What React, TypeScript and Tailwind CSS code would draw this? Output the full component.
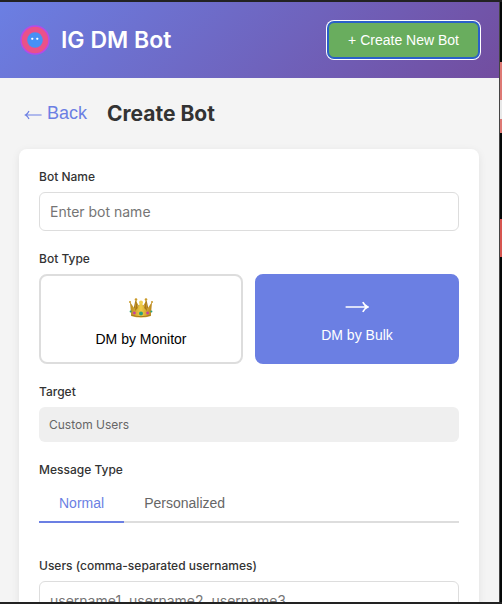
import { useState } from 'react';
import type { ReactNode } from 'react';

const TABS = ['Normal', 'Personalized'] as const;

const LABEL = 'block text-xs leading-[15px] font-medium text-[#333333] mb-2';
const FIELD =
  'block w-full rounded-md border border-[#dddddd] bg-white px-2.5 py-2.5 text-sm leading-[17px] text-[#333333] placeholder:text-[#757575] outline-none';

function Logo() {
  return (
    <svg viewBox="0 0 32 32" className="w-8 h-8" aria-hidden="true">
      <circle cx="16" cy="16" r="14" fill="#ea5189" stroke="#b74be6" strokeWidth="1.5" />
      <circle cx="16" cy="16" r="7.8" fill="#4690f6" />
      <rect x="12.4" y="13.8" width="1.8" height="2" rx="0.5" fill="#ffffff" />
      <rect x="17.4" y="13.8" width="1.8" height="2" rx="0.5" fill="#ffffff" />
    </svg>
  );
}

function Crown() {
  return (
    <svg viewBox="0 0 32 32" className="w-8 h-8" aria-hidden="true">
      <defs>
        <linearGradient id="gold" x1="0" x2="1" y1="0" y2="0">
          <stop offset="0" stopColor="#b98a20" />
          <stop offset="0.5" stopColor="#f0cb45" />
          <stop offset="1" stopColor="#b8841c" />
        </linearGradient>
      </defs>
      <path d="M8 21 L10.3 9.5 L16 18 L21.7 9.5 L24 21 Z" fill="#9c6d18" />
      <path d="M5 11 L9.5 17.5 L11.2 9 L13.2 15.5 L16 11 L18.8 15.5 L20.8 9 L22.5 17.5 L27 11 L25.8 25 Q16 28 6.2 25 Z" fill="url(#gold)" />
      <path d="M11.2 10 L12.8 17 L10 20 Z M20.8 10 L19.2 17 L22 20 Z" fill="#a87718" />
      <path d="M6.2 24 Q16 27.4 25.8 24" fill="none" stroke="#a97b1c" strokeWidth="1" />
      <circle cx="5" cy="11" r="1" fill="#c99a2a" />
      <circle cx="11" cy="8.6" r="1.3" fill="#c99a2a" />
      <circle cx="16" cy="11.4" r="2" fill="#f0d050" />
      <circle cx="21" cy="8.6" r="1.3" fill="#c99a2a" />
      <circle cx="27" cy="11" r="1" fill="#c99a2a" />
      <circle cx="16" cy="22.6" r="2" fill="#2aa27e" />
      <circle cx="9.4" cy="22" r="1.4" fill="#c43fa4" />
      <circle cx="22.6" cy="22" r="1.4" fill="#c43fa4" />
      <circle cx="5.6" cy="20.4" r="1" fill="#2aa27e" />
      <circle cx="26.4" cy="20.4" r="1" fill="#2aa27e" />
    </svg>
  );
}

function ArrowLeft() {
  return (
    <svg viewBox="0 0 18 18" className="w-[18px] h-[18px]" fill="none" stroke="currentColor" strokeWidth="1.2" aria-hidden="true">
      <path d="M17.6 10 H1.4 M5 6 Q3.8 8.8 1.4 10 Q3.8 11.2 5 14" />
    </svg>
  );
}

function ArrowRight() {
  return (
    <svg viewBox="0 0 24 24" className="w-6 h-6" fill="none" stroke="currentColor" strokeWidth="1.7" aria-hidden="true">
      <path d="M0.6 12 H23 M17.8 7.2 Q19.4 10.6 22.8 12 Q19.4 13.4 17.8 16.8" />
    </svg>
  );
}

function TypeButton({ active, icon, label, onClick }: {
  active: boolean;
  icon: ReactNode;
  label: string;
  onClick: () => void;
}) {
  return (
    <button
      type="button"
      aria-pressed={active}
      onClick={onClick}
      className={`flex flex-col items-center justify-center gap-2 min-h-[90px] rounded-lg border-2 p-[15px] font-['Liberation_Sans',sans-serif] text-sm leading-4 ${
        active ? 'border-[#6b7fe3] bg-[#6b7fe3] text-white' : 'border-[#dddddd] bg-white text-black'
      }`}
    >
      {icon}
      <span>{label}</span>
    </button>
  );
}

// Sliver of the desktop that shows beside the window
function DesktopEdge() {
  return (
    <div className="w-[3px] shrink-0 flex flex-col border-l border-[#444444] bg-[#050808]" aria-hidden="true">
      <div className="h-[60px]" />
      <div className="h-[38px] bg-[#dd7974]" />
      <div className="h-[19px] bg-[#e8e8e8]" />
      <div className="h-[14px] bg-[#dd7974]" />
      <div className="h-[86px]" />
      <div className="h-[38px] bg-[#d65550]" />
    </div>
  );
}

export default function App() {
  const [botType, setBotType] = useState<'monitor' | 'bulk'>('bulk');
  const [tab, setTab] = useState<(typeof TABS)[number]>('Normal');

  return (
    <div className="h-screen flex overflow-hidden border-y-2 border-[#222222] font-['Inter',sans-serif]">
      <div className="flex-1 min-w-0 overflow-hidden bg-[#f4f4f4]">
        {/* Header */}
        <header className="flex items-center justify-between py-5 pl-[19px] pr-5 bg-[linear-gradient(135deg,#6b7fe3,#724d9f)]">
          <div className="flex items-center gap-2.5">
            <Logo />
            <h1 className="text-[23px] leading-7 font-semibold text-white">IG DM Bot</h1>
          </div>
          <button
            type="button"
            className="h-9 px-[19px] rounded-md border border-[#2a5fc9] bg-[#69ad5e] shadow-[0_0_0_1px_#2a5fc9,0_0_0_2px_#ffffff] font-['Liberation_Sans',sans-serif] text-sm leading-4 text-white"
          >
            + Create New Bot
          </button>
        </header>

        <main className="py-5 pl-[19px] pr-5">
          <div className="flex items-center gap-[15px] mb-5">
            <button
              type="button"
              className="flex items-center gap-[5px] p-[5px] font-['Liberation_Sans',sans-serif] text-lg leading-[21px] text-[#6b7fe3]"
            >
              <ArrowLeft />
              Back
            </button>
            <h2 className="text-[21px] leading-7 font-bold text-[#333333]">Create Bot</h2>
          </div>

          {/* Form */}
          <form className="rounded-lg bg-white p-5 shadow-[0_2px_8px_rgba(0,0,0,0.08)]" onSubmit={e => e.preventDefault()}>
            <div className="mb-5">
              <label htmlFor="bot-name" className={LABEL}>Bot Name</label>
              <input id="bot-name" type="text" placeholder="Enter bot name" className={FIELD} />
            </div>

            <div className="mb-5" role="group" aria-labelledby="bot-type">
              <span id="bot-type" className={LABEL}>Bot Type</span>
              <div className="grid grid-cols-2 gap-3">
                <TypeButton
                  active={botType === 'monitor'}
                  icon={<Crown />}
                  label="DM by Monitor"
                  onClick={() => setBotType('monitor')}
                />
                <TypeButton
                  active={botType === 'bulk'}
                  icon={<ArrowRight />}
                  label="DM by Bulk"
                  onClick={() => setBotType('bulk')}
                />
              </div>
            </div>

            <div className="mb-5">
              <span className={LABEL}>Target</span>
              <div className="rounded-md bg-[#efefef] p-2.5 text-xs leading-[15px] text-[#666666]">Custom Users</div>
            </div>

            <div className="mb-[35px]">
              <span id="message-type" className={LABEL}>Message Type</span>
              <div className="flex border-b-2 border-[#dddddd]" role="tablist" aria-labelledby="message-type">
                {TABS.map(t => (
                  <button
                    key={t}
                    type="button"
                    role="tab"
                    aria-selected={tab === t}
                    onClick={() => setTab(t)}
                    className={`-mb-0.5 border-b-2 px-5 py-2.5 font-['Liberation_Sans',sans-serif] text-sm leading-4 ${
                      tab === t ? 'border-[#6b7fe3] text-[#6b7fe3]' : 'border-transparent text-[#666666]'
                    }`}
                  >
                    {t}
                  </button>
                ))}
              </div>
            </div>

            <div>
              <label htmlFor="users" className={LABEL}>Users (comma-separated usernames)</label>
              <textarea id="users" rows={4} placeholder="username1, username2, username3" className={`${FIELD} resize-none`} />
            </div>
          </form>
        </main>
      </div>
      <DesktopEdge />
    </div>
  );
}
